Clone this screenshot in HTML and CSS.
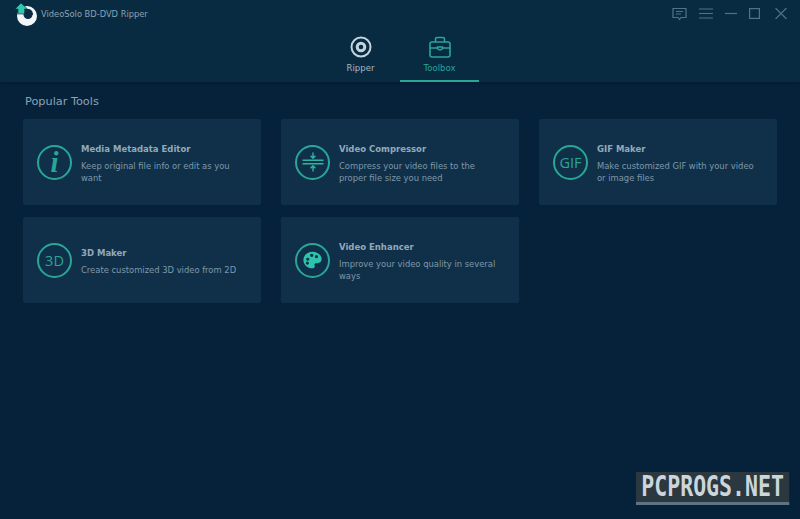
FILE: index.html
```html
<!DOCTYPE html>
<html lang="en">
<head>
    <meta charset="UTF-8">
    <title>VideoSolo BD-DVD Ripper</title>
    <link rel="stylesheet" href="styles.css">
</head>
<body>
    <header class="top-bar">
        <div class="title-row">
            <div class="brand">
                <svg class="logo" width="23" height="26" viewBox="0 0 23 26">
                    <circle cx="12" cy="15" r="10" fill="#f2f6f8"/>
                    <circle cx="13" cy="13.5" r="4.5" fill="#0a2b42"/>
                    <path d="M8 8 H14 Q18 9 18 14 L14 14 Z" fill="#0a2b42"/>
                    <path d="M6 2 L12.5 8 H9.5 V13 H3 V8 H0 Z" fill="#2fc7ae" stroke="#0a2b42" stroke-width="0.6"/>
                </svg>
                <span class="app-name">VideoSolo BD-DVD Ripper</span>
            </div>
            <div class="window-btns">
                <svg width="15" height="14" viewBox="0 0 15 14" fill="none" stroke="#4f7388" stroke-width="1.2">
                    <path d="M1 1.5 H14 V10.5 H9 L7.5 12.5 L6 10.5 H1 Z"/>
                    <path d="M4 4.5 H11 M4 7 H9"/>
                </svg>
                <svg width="14" height="11" viewBox="0 0 14 11" stroke="#4f7388" stroke-width="1.2">
                    <path d="M0 1 H14 M0 5.5 H14 M0 10 H14"/>
                </svg>
                <svg width="12" height="11" viewBox="0 0 12 11" stroke="#4f7388" stroke-width="1.2">
                    <path d="M0 5.5 H12"/>
                </svg>
                <svg width="11" height="11" viewBox="0 0 11 11" fill="none" stroke="#4f7388" stroke-width="1.2">
                    <rect x="0.6" y="0.6" width="9.8" height="9.8"/>
                </svg>
                <svg class="close-btn" width="12" height="11" viewBox="0 0 12 11" stroke="#4f7388" stroke-width="1.2">
                    <path d="M0.5 0 L11.5 11 M11.5 0 L0.5 11"/>
                </svg>
            </div>
        </div>
        <nav class="tabs">
            <div class="tab">
                <svg width="22" height="22" viewBox="0 0 22 22" fill="none" stroke="#c3d2dc">
                    <circle cx="11" cy="11" r="9.5" stroke-width="2"/>
                    <circle cx="11" cy="11" r="3.8" stroke-width="3"/>
                </svg>
                <span>Ripper</span>
            </div>
            <div class="tab active">
                <svg width="22" height="22" viewBox="0 0 22 22" fill="none" stroke="#2aa596" stroke-width="1.6">
                    <rect x="1" y="6" width="20" height="15" rx="2"/>
                    <path d="M6.5 6 V3 Q6.5 1.5 8 1.5 H14 Q15.5 1.5 15.5 3 V6"/>
                    <path d="M1 12 H8.5 M13.5 12 H21"/>
                    <path d="M8.5 11 H13.5 V12.5 Q11 15.5 8.5 12.5 Z"/>
                </svg>
                <span>Toolbox</span>
            </div>
        </nav>
    </header>

    <main class="content">
        <h2 class="section-title">Popular Tools</h2>
        <div class="tool-grid">
            <div class="tool-card">
                <div class="tool-icon">
                    <span class="info-mark">i</span>
                </div>
                <div class="tool-text">
                    <h3>Media Metadata Editor</h3>
                    <p>Keep original file info or edit as you want</p>
                </div>
            </div>
            <div class="tool-card">
                <div class="tool-icon">
                    <svg width="22" height="22" viewBox="0 0 22 22" fill="none" stroke="#2bb5a2" stroke-width="1.4">
                        <path d="M0.5 9.3 H21.5 M0.5 12.7 H21.5"/>
                        <path d="M11 1.5 V7 M8.6 4.8 L11 7.2 L13.4 4.8"/>
                        <path d="M11 20.5 V15 M8.6 17.2 L11 14.8 L13.4 17.2"/>
                    </svg>
                </div>
                <div class="tool-text">
                    <h3>Video Compressor</h3>
                    <p>Compress your video files to the proper file size you need</p>
                </div>
            </div>
            <div class="tool-card">
                <div class="tool-icon"><span class="icon-label">GIF</span></div>
                <div class="tool-text">
                    <h3>GIF Maker</h3>
                    <p>Make customized GIF with your video or image files</p>
                </div>
            </div>
            <div class="tool-card">
                <div class="tool-icon"><span class="icon-label">3D</span></div>
                <div class="tool-text">
                    <h3>3D Maker</h3>
                    <p>Create customized 3D video from 2D</p>
                </div>
            </div>
            <div class="tool-card">
                <div class="tool-icon">
                    <svg width="19" height="18" viewBox="0 0 24 22">
                        <path fill="#2cc4ab" fill-rule="evenodd" d="M12 0.5 C18.5 0.5 23.5 4.8 23.5 10.2 C23.5 14 20.5 15.2 17.5 15 C15 14.8 14 16 14.6 17.6 C15.3 19.6 14.4 21.5 12 21.5 C5.5 21.5 0.5 16.8 0.5 11 C0.5 5.2 5.5 0.5 12 0.5 Z M6 8 a2 2 0 1 0 0.01 0 Z M11 3.2 a2 2 0 1 0 0.01 0 Z M17 4.8 a2 2 0 1 0 0.01 0 Z M5.5 13 a2 2 0 1 0 0.01 0 Z"/>
                    </svg>
                </div>
                <div class="tool-text">
                    <h3>Video Enhancer</h3>
                    <p>Improve your video quality in several ways</p>
                </div>
            </div>
        </div>
    </main>

    <div class="watermark">PCPROGS.NET</div>
</body>
</html>
```

FILE: styles.css
```css
html, body {
    height: 100%;
}

body {
    margin: 0;
    overflow: hidden;
    background: #06223a;
    color: #8fa6b5;
    font-family: "DejaVu Sans", sans-serif;
    position: relative;
}

.top-bar {
    height: 82px;
    background: #082b42;
    box-shadow: 0 1px 3px #051c2f;
}

.title-row {
    height: 27px;
    display: flex;
    justify-content: space-between;
    align-items: center;
    padding: 0 13px 0 15px;
}

.brand {
    display: flex;
    align-items: center;
    gap: 3px;
}

.app-name {
    font-size: 8.3px;
    color: #8ba3b2;
}

.window-btns {
    display: flex;
    align-items: center;
    gap: 12px;
}

.close-btn {
    margin-left: 3px;
}

.tabs {
    display: flex;
    justify-content: center;
    margin-top: 9px;
}

.tab {
    width: 79px;
    height: 46px;
    box-sizing: border-box;
    display: flex;
    flex-direction: column;
    align-items: center;
    gap: 5px;
    font-size: 8.5px;
    line-height: 10px;
    color: #a3b8c6;
}

.tab.active {
    color: #2aa596;
    border-bottom: 2px solid #2aa596;
}

.content {
    padding: 12px 23px 0;
}

.section-title {
    margin: 0 0 9px 2px;
    font-size: 11.3px;
    line-height: 16px;
    font-weight: normal;
    color: #8ba3b2;
}

.tool-grid {
    display: grid;
    grid-template-columns: repeat(3, 238px);
    grid-auto-rows: 86px;
    column-gap: 20px;
    row-gap: 12px;
}

.tool-card {
    display: flex;
    align-items: center;
    gap: 9px;
    padding: 0 14px;
    background: #10304a;
    border-radius: 2px;
}

.tool-icon {
    width: 35px;
    height: 35px;
    flex: none;
    box-sizing: border-box;
    border: 2px solid #2aa596;
    border-radius: 50%;
    display: flex;
    align-items: center;
    justify-content: center;
}

.info-mark {
    font-family: "Liberation Serif", serif;
    font-style: italic;
    font-weight: bold;
    font-size: 29px;
    color: #2aa596;
}

.icon-label {
    font-family: "Open Sans", sans-serif;
    font-size: 14.5px;
    color: #2aa596;
}

.tool-text {
    min-width: 0;
    padding-top: 2px;
}

.tool-text h3 {
    margin: 0 0 5px;
    font-size: 8.5px;
    line-height: 12px;
    font-weight: bold;
    color: #93a9b8;
}

.tool-text p {
    margin: 0;
    font-size: 8.4px;
    line-height: 12px;
    color: #7f98a9;
}

/* squeezed sideways, the text is taller and narrower than any installed face */
.watermark {
    position: absolute;
    left: 636px;
    top: 472px;
    width: 199px;
    height: 30px;
    background: #2b383f;
    border-bottom: 3px solid #5d7482;
    font-family: "DejaVu Sans Mono", monospace;
    font-weight: bold;
    font-size: 28px;
    line-height: 30px;
    text-align: center;
    white-space: nowrap;
    color: #cdd5da;
    transform: scaleX(0.77);
    transform-origin: left top;
}
```
